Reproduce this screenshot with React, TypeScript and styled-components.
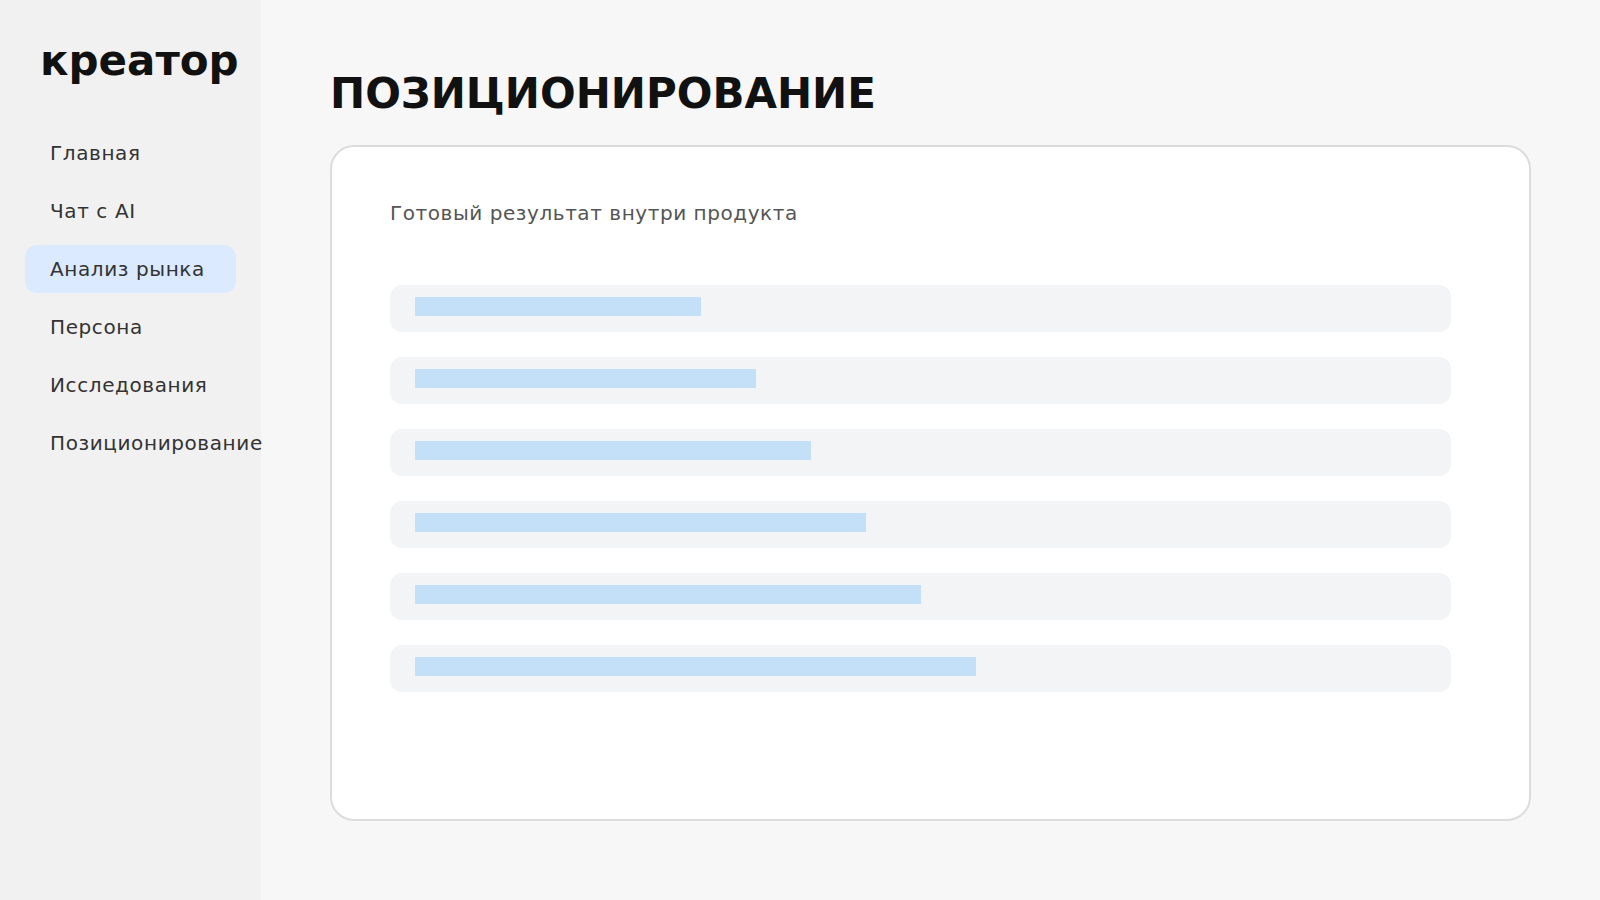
import React from "react"
import styled, { createGlobalStyle } from "styled-components"

const GlobalStyle = createGlobalStyle`
  html, body {
    margin: 0;
    padding: 0;
    background: #f7f7f7;
    font-family: "DejaVu Sans", "Noto Sans", sans-serif;
  }
  * {
    box-sizing: border-box;
  }
`

const navItems = [
  "Главная",
  "Чат с AI",
  "Анализ рынка",
  "Персона",
  "Исследования",
  "Позиционирование",
]

// widths of the placeholder bars in the preview block
const barWidths = [286, 341, 396, 451, 506, 561]

export default function App() {
  return (
    <>
      <GlobalStyle />
      <Layout>
        <Sidebar>
          <Logo>креатор</Logo>
          <Nav>
            {navItems.map((item) => (
              <NavItem key={item} $active={item === "Анализ рынка"}>
                {item}
              </NavItem>
            ))}
          </Nav>
        </Sidebar>
        <Main>
          <Title>ПОЗИЦИОНИРОВАНИЕ</Title>
          <Card>
            <Caption>Готовый результат внутри продукта</Caption>
            <Rows>
              {barWidths.map((w, i) => (
                <Row key={i}>
                  <Bar style={{ width: w }} />
                </Row>
              ))}
            </Rows>
          </Card>
        </Main>
      </Layout>
    </>
  )
}

const Layout = styled.div`
  display: flex;
  min-height: 900px;
`

const Sidebar = styled.aside`
  width: 261px;
  flex-shrink: 0;
  background: #f1f1f1;
  padding: 36px 25px;
  display: flex;
  flex-direction: column;
`

const Logo = styled.div`
  font-size: 42px;
  font-weight: 700;
  color: #111;
  padding-left: 15px;
  margin-bottom: 44px;
`

const Nav = styled.nav`
  display: flex;
  flex-direction: column;
  gap: 10px;
`

const NavItem = styled.div<{ $active?: boolean }>`
  height: 48px;
  display: flex;
  align-items: center;
  padding: 0 25px;
  border-radius: 12px;
  font-size: 20px;
  letter-spacing: 0.6px;
  color: #333;
  white-space: nowrap;
  background: ${(p) => (p.$active ? "#dbeafe" : "transparent")};
`

const Main = styled.main`
  flex: 1;
  padding: 69px 69px;
`

const Title = styled.h1`
  margin: 0 0 26px;
  font-size: 42px;
  line-height: 1.2;
  font-weight: 700;
  color: #111;
`

const Card = styled.section`
  height: 676px;
  background: #fff;
  border: 2px solid #dcdcdc;
  border-radius: 24px;
  padding: 54px 58px;
`

const Caption = styled.div`
  font-size: 20px;
  color: #555;
  letter-spacing: 0.56px;
  margin-bottom: 60px;
`

const Rows = styled.div`
  max-width: 1061px;
  display: flex;
  flex-direction: column;
  gap: 25px;
`

const Row = styled.div`
  height: 47px;
  background: #f3f4f6;
  border-radius: 12px;
  padding: 12px 25px;
`

const Bar = styled.div`
  height: 19px;
  background: #c4dff8;
`
